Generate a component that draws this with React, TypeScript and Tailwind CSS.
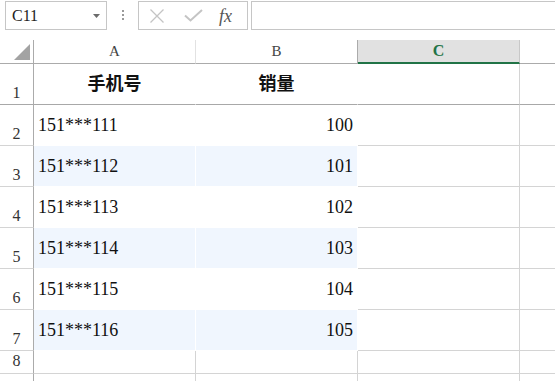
import React from 'react'

const serif = { fontFamily: '"Liberation Serif", "Noto Sans CJK SC", serif' }

type Row = { num: string; phone: string; sales: string; h: string; shade: boolean; numPad: string }

const rows: Row[] = [
	{ num: '2', phone: '151***111', sales: '100', h: 'h-[41px]', shade: false, numPad: 'pb-[3px]' },
	{ num: '3', phone: '151***112', sales: '101', h: 'h-[41px]', shade: true, numPad: 'pb-[3px]' },
	{ num: '4', phone: '151***113', sales: '102', h: 'h-[41px]', shade: false, numPad: 'pb-[3px]' },
	{ num: '5', phone: '151***114', sales: '103', h: 'h-[41px]', shade: true, numPad: 'pb-[3px]' },
	{ num: '6', phone: '151***115', sales: '104', h: 'h-[41px]', shade: false, numPad: 'pb-[3px]' },
	{ num: '7', phone: '151***116', sales: '105', h: 'h-[41px]', shade: true, numPad: 'pb-[3px]' },
]

const FormulaBar = () => (
	<div className="flex h-[40px] items-start pt-[1px] pl-[5px]">
		<div className="flex h-[29px] w-[102px] items-center justify-between border border-[#c6c6c6] pl-[6px] pr-[6px]">
			<span className="text-[16px] leading-none text-[#222]" style={serif}>C11</span>
			<svg width="7" height="4" viewBox="0 0 7 4"><path d="M0 0h7L3.5 4z" fill="#6b6b6b" /></svg>
		</div>
		<div className="flex w-[31px] flex-col items-center justify-center gap-[2px] pt-[9px]">
			<span className="h-[2px] w-[2px] bg-[#9a9a9a]" />
			<span className="h-[2px] w-[2px] bg-[#9a9a9a]" />
			<span className="h-[2px] w-[2px] bg-[#9a9a9a]" />
		</div>
		<div className="flex h-[29px] w-[110px] items-center border border-[#c6c6c6]">
			<svg className="ml-[10px]" width="16" height="16" viewBox="0 0 16 16">
				<path d="M1.5 1.5l13 13M14.5 1.5l-13 13" stroke="#c4c4c4" strokeWidth="1.3" fill="none" />
			</svg>
			<svg className="ml-[19px]" width="19" height="13" viewBox="0 0 19 13">
				<path d="M1 6.5l5.5 5L18 1" stroke="#c4c4c4" strokeWidth="2" fill="none" />
			</svg>
			<span className="ml-[16px] text-[18px] italic leading-none text-[#555]" style={serif}>fx</span>
		</div>
		<div className="ml-[3px] h-[29px] flex-1 border-y border-l border-[#c6c6c6]" />
	</div>
)

const HeaderRow = () => (
	<div className="flex h-[24px]">
		<div className="flex w-[34px] items-end justify-end border-r border-b border-[#ababab] pb-[3px] pr-[3px]">
			<svg width="16" height="16" viewBox="0 0 16 16"><path d="M16 0V16H0z" fill="#a3a3a3" /></svg>
		</div>
		<div className="flex w-[162px] items-center justify-center border-r border-b border-r-[#e2e2e2] border-b-[#ababab] text-[15px] text-[#444]" style={serif}>A</div>
		<div className="flex w-[162px] items-center justify-center border-r border-b border-r-[#ababab] border-b-[#ababab] text-[15px] text-[#444]" style={serif}>B</div>
		<div className="flex w-[162px] items-center justify-center border-r border-b-2 border-r-[#c8c8c8] border-b-[#217346] bg-[#e1e1e1] text-[16px] font-bold text-[#217346]" style={serif}>C</div>
		<div className="flex-1 border-b border-[#ababab]" />
	</div>
)

export default function App() {
	return (
		<div className="h-[381px] w-[555px] overflow-hidden bg-white" style={serif}>
			<FormulaBar />
			<HeaderRow />

			<div className="flex h-[41px]">
				<div className="flex w-[34px] items-end justify-center border-r border-b border-r-[#ababab] border-b-[#a8a8a8] pb-[3px] text-[16px] leading-none text-[#333]">1</div>
				<div className="flex w-[162px] items-center justify-center border-r border-b border-r-white border-b-[#a8a8a8] text-[18px] font-bold leading-none text-[#111]">手机号</div>
				<div className="flex w-[162px] items-center justify-center border-r border-b border-r-white border-b-[#a8a8a8] text-[18px] font-bold leading-none text-[#111]">销量</div>
				<div className="w-[162px] border-r border-b border-r-[#d4d4d4] border-b-[#a8a8a8]" />
				<div className="flex-1 border-b border-[#a8a8a8]" />
			</div>

			{rows.map((r) => (
				<div key={r.num} className={`flex ${r.h}`}>
					<div className={`flex w-[34px] items-end justify-center border-r border-b border-r-[#ababab] border-b-[#d4d4d4] ${r.numPad} text-[16px] leading-none text-[#333]`}>{r.num}</div>
					<div className={`flex w-[162px] items-center border-r border-b border-white pl-[4px] text-[18px] leading-none text-[#111] ${r.shade ? 'bg-[#f0f6fe]' : ''}`}>{r.phone}</div>
					<div className={`flex w-[162px] items-center justify-end border-r border-b border-white pr-[4px] text-[18px] leading-none text-[#111] ${r.shade ? 'bg-[#f0f6fe]' : ''}`}>{r.sales}</div>
					<div className="w-[162px] border-r border-b border-[#d4d4d4]" />
					<div className="flex-1 border-b border-[#d4d4d4]" />
				</div>
			))}

			<div className="flex h-[23px]">
				<div className="flex w-[34px] items-end justify-center border-r border-b border-r-[#ababab] border-b-[#d4d4d4] pb-[4px] text-[16px] leading-none text-[#333]">8</div>
				<div className="w-[162px] border-r border-b border-[#d4d4d4]" />
				<div className="w-[162px] border-r border-b border-[#d4d4d4]" />
				<div className="w-[162px] border-r border-b border-[#d4d4d4]" />
				<div className="flex-1 border-b border-[#d4d4d4]" />
			</div>

			<div className="flex h-[24px]">
				<div className="w-[34px] border-r border-[#ababab]" />
				<div className="w-[162px] border-r border-[#d4d4d4]" />
				<div className="w-[162px] border-r border-[#d4d4d4]" />
				<div className="w-[162px] border-r border-[#d4d4d4]" />
				<div className="flex-1" />
			</div>
		</div>
	)
}
